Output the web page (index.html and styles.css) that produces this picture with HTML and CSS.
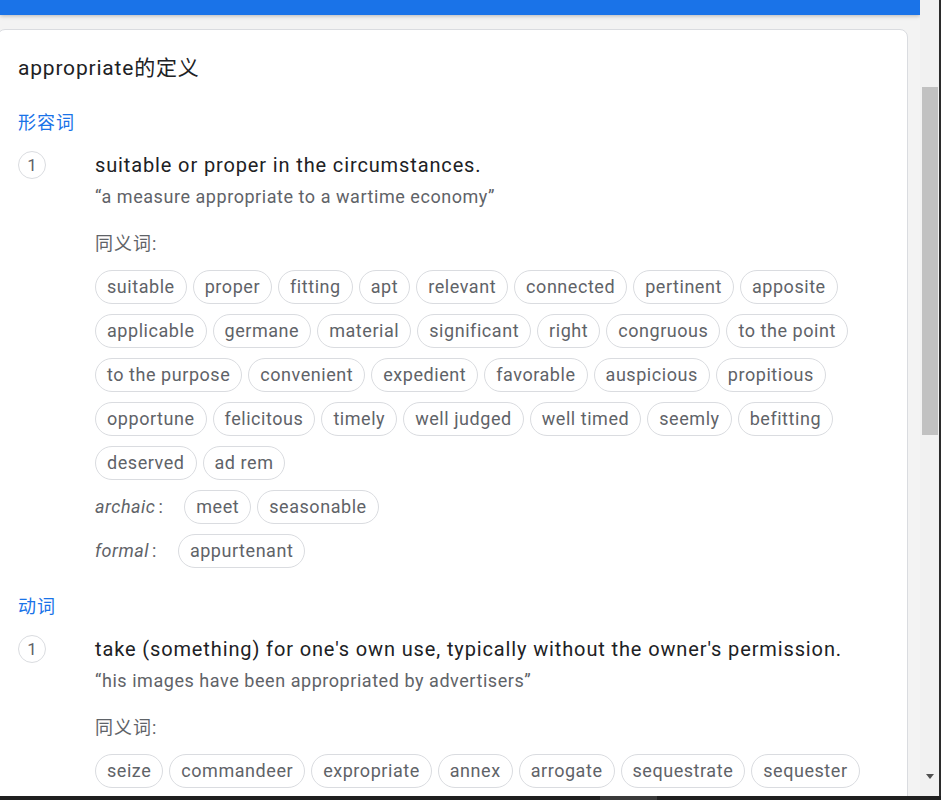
FILE: index.html
```html
<!DOCTYPE html>
<html lang="zh-CN">
<head>
<meta charset="utf-8">
<title>appropriate的定义</title>
<link rel="stylesheet" href="styles.css">
</head>
<body>
<div class="window">
  <div class="main">
    <div class="topbar"></div>
    <div class="content">
      <div class="card">
        <h1 class="title">appropriate的定义</h1>

        <div class="pos">形容词</div>
        <div class="sense">
          <div class="num"><span class="circle">1</span></div>
          <div class="body">
            <div class="def">suitable or proper in the circumstances.</div>
            <div class="example">“a measure appropriate to a wartime economy”</div>
            <div class="synlabel">同义词:</div>
            <div class="chips">
              <span class="chip">suitable</span><span class="chip">proper</span><span class="chip">fitting</span><span class="chip">apt</span><span class="chip">relevant</span><span class="chip">connected</span><span class="chip">pertinent</span><span class="chip">apposite</span>
              <span class="chip">applicable</span><span class="chip">germane</span><span class="chip">material</span><span class="chip">significant</span><span class="chip">right</span><span class="chip">congruous</span><span class="chip">to the point</span>
              <span class="chip">to the purpose</span><span class="chip">convenient</span><span class="chip">expedient</span><span class="chip">favorable</span><span class="chip">auspicious</span><span class="chip">propitious</span>
              <span class="chip">opportune</span><span class="chip">felicitous</span><span class="chip">timely</span><span class="chip">well judged</span><span class="chip">well timed</span><span class="chip">seemly</span><span class="chip">befitting</span>
              <span class="chip">deserved</span><span class="chip">ad rem</span>
            </div>
            <div class="chips">
              <span class="reg">archaic<span class="colon">:</span></span><span class="chip">meet</span><span class="chip">seasonable</span>
            </div>
            <div class="chips">
              <span class="reg">formal<span class="colon">:</span></span><span class="chip">appurtenant</span>
            </div>
          </div>
        </div>

        <div class="pos pos2">动词</div>
        <div class="sense">
          <div class="num"><span class="circle">1</span></div>
          <div class="body">
            <div class="def">take (something) for one's own use, typically without the owner's permission.</div>
            <div class="example">“his images have been appropriated by advertisers”</div>
            <div class="synlabel">同义词:</div>
            <div class="chips">
              <span class="chip">seize</span><span class="chip">commandeer</span><span class="chip">expropriate</span><span class="chip">annex</span><span class="chip">arrogate</span><span class="chip">sequestrate</span><span class="chip">sequester</span>
            </div>
          </div>
        </div>
      </div>
    </div>
  </div>
  <div class="scrollbar">
    <div class="track"><div class="thumb"></div></div>
    <div class="arrow"></div>
  </div>
  <div class="edge"></div>
</div>
<div class="taskbar"><div class="tb-left"></div><div class="tb-seg"></div><div class="tb-rest"></div></div>
</body>
</html>
```

FILE: styles.css
```css
* { box-sizing: border-box; }
html, body { margin: 0; padding: 0; }
body {
  width: 941px;
  height: 800px;
  overflow: hidden;
  display: flex;
  flex-direction: column;
  background: #f3f3f3;
  font-family: Roboto, "Noto Sans CJK SC", Arial, sans-serif;
}
.window {
  display: flex;
  height: 796px;
  flex: none;
}
.main {
  width: 920px;
  flex: none;
  overflow: hidden;
  display: flex;
  flex-direction: column;
  background: #f3f3f3;
}
.topbar {
  height: 15px;
  flex: none;
  background: #1a73e8;
  box-shadow: 0 1px 4px rgba(0,0,0,0.25);
  position: relative;
  z-index: 1;
}
.content {
  padding-top: 14px;
  padding-right: 12px;
  margin-left: -3px;
}
.card {
  background: #fff;
  border: 1px solid #dadce0;
  border-radius: 8px;
  padding: 24px 0 0 20px;
  min-height: 900px;
}
.title {
  margin: 0;
  font-size: 21px;
  font-weight: 400;
  line-height: 28px;
  letter-spacing: 0.8px;
  color: #202124;
}
.pos {
  margin-top: 29px;
  font-size: 18px;
  line-height: 24px;
  letter-spacing: 1px;
  color: #1a73e8;
}
.pos2 { margin-top: 27px; }
.sense {
  display: flex;
  margin-top: 17px;
}
.num {
  width: 77px;
  flex: none;
}
.circle {
  display: flex;
  align-items: center;
  justify-content: center;
  width: 28px;
  height: 28px;
  border: 1px solid #dadce0;
  border-radius: 50%;
  font-size: 17px;
  color: #5f6368;
  margin-top: -1px;
}
.body { flex: 1; }
.def {
  font-size: 20px;
  line-height: 26px;
  letter-spacing: 0.87px;
  color: #202124;
}
.example {
  margin-top: 7px;
  font-size: 18px;
  line-height: 24px;
  letter-spacing: 0.55px;
  color: #5f6368;
}
.synlabel {
  margin-top: 23px;
  font-size: 18px;
  line-height: 24px;
  letter-spacing: 1px;
  color: #5f6368;
}
.chips {
  display: flex;
  flex-wrap: wrap;
  align-items: center;
  column-gap: 6px;
  row-gap: 10px;
  margin-top: 14px;
}
.chips + .chips { margin-top: 10px; }
.chip {
  height: 34px;
  line-height: 32px;
  padding: 0 11px;
  border: 1px solid #dadce0;
  border-radius: 17px;
  font-size: 18px;
  letter-spacing: 0.55px;
  color: #5f6368;
  white-space: nowrap;
}
.reg {
  font-style: italic;
  font-size: 18px;
  letter-spacing: 0.5px;
  color: #5f6368;
  margin-right: 15px;
  line-height: 34px;
}
.colon { margin-left: 3px; font-style: normal; }
.scrollbar {
  width: 19px;
  flex: none;
  background: #f1f1f1;
  display: flex;
  flex-direction: column;
}
.track {
  flex: 1;
  padding: 87px 1px 0 2px;
}
.thumb {
  height: 348px;
  background: #c1c1c1;
}
.arrow {
  height: 17px;
  display: flex;
  justify-content: center;
  padding-top: 2px;
  margin-bottom: 7px;
}
.arrow::before {
  content: "";
  width: 0;
  height: 0;
  border-left: 4.5px solid transparent;
  border-right: 4.5px solid transparent;
  border-top: 5px solid #505050;
}
.edge {
  width: 2px;
  flex: none;
  background: #2b2b2b;
}
.taskbar {
  height: 4px;
  flex: none;
  display: flex;
  background: #202020;
}
.tb-left { width: 600px; }
.tb-seg { width: 57px; background: #3a3a3a; }
.tb-rest { flex: 1; }
```
